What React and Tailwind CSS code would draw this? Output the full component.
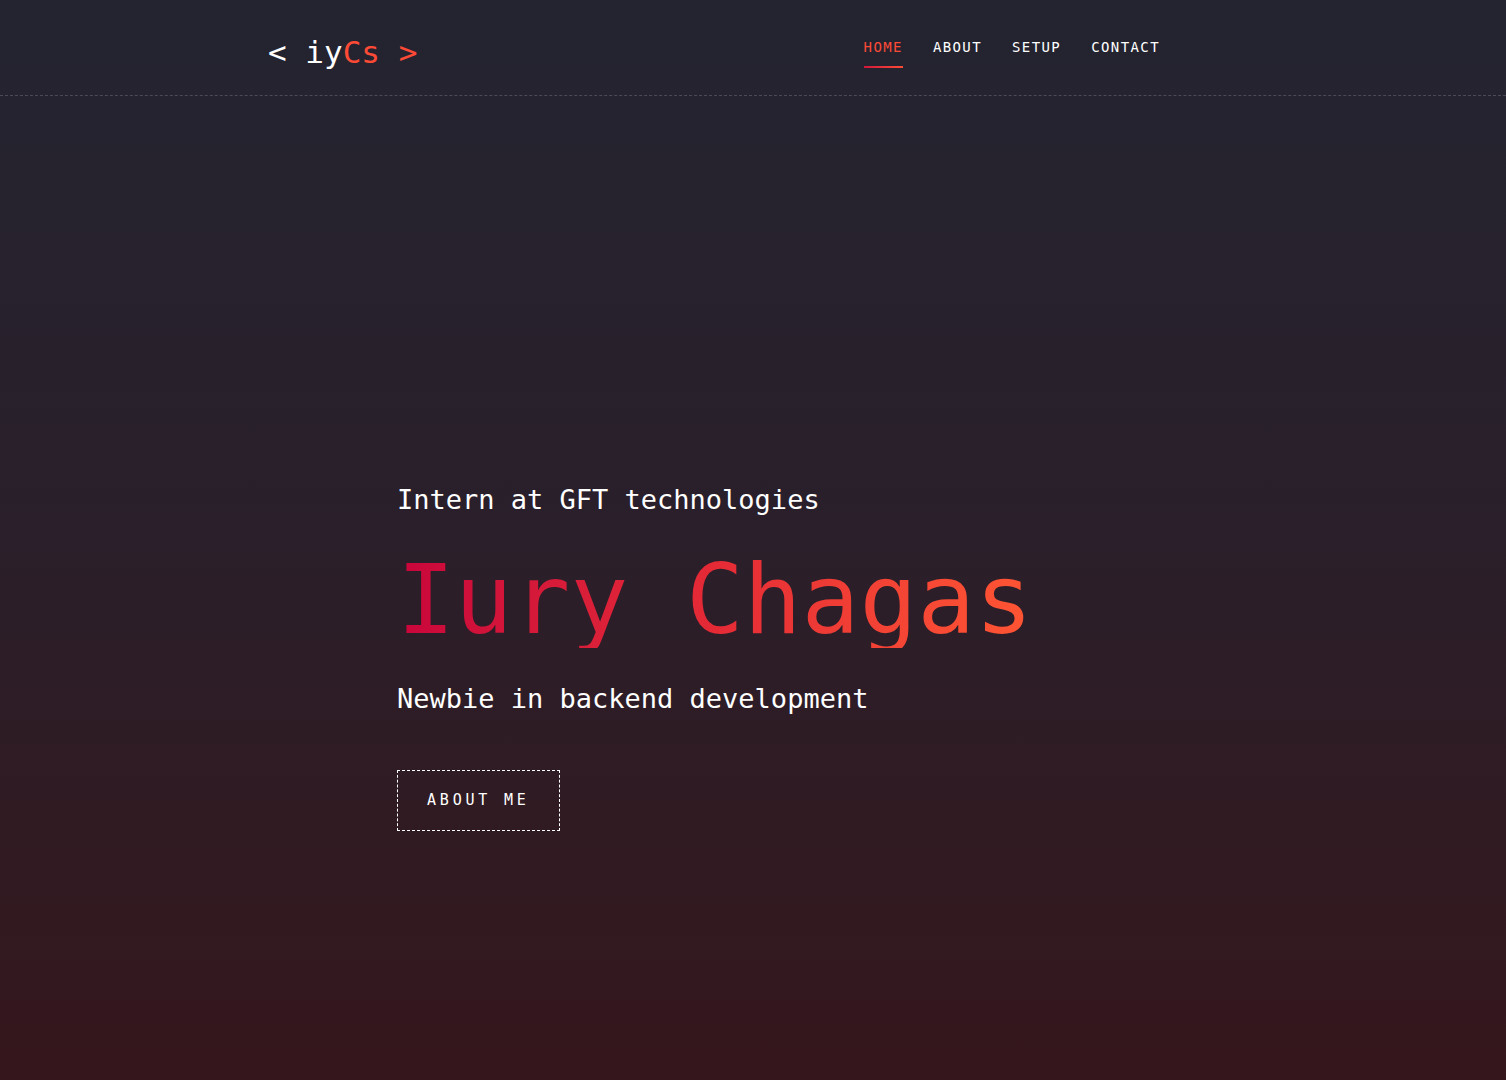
const mono = { fontFamily: '"DejaVu Sans Mono", "Liberation Mono", monospace' }

const links = ['HOME', 'ABOUT', 'SETUP', 'CONTACT']

function Header() {
  return (
    <header className="border-b border-dashed border-[#4a4a58]">
      <div className="mx-auto flex h-[95px] w-[970px] items-center justify-between">
        <a className="mt-[9px] text-[31px] leading-none text-white">
          <span>&lt; iy</span>
          <span className="text-[#fc4a36]">Cs &gt;</span>
        </a>
        <nav className="mr-[78px] mt-[12px] flex items-center gap-[30px]">
          {links.map((l, i) => (
            <a
              key={l}
              className={`relative pb-[13px] text-[14px] leading-none tracking-[1.4px] ${
                i === 0 ? 'text-[#fc4a36]' : 'text-white'
              }`}
            >
              {l}
              {i === 0 && (
                <span className="absolute bottom-[-1px] left-0 h-[2px] w-full bg-gradient-to-r from-[#d2143a] to-[#fc4a36]" />
              )}
            </a>
          ))}
        </nav>
      </div>
    </header>
  )
}

export default function App() {
  return (
    <div
      className="min-h-[1080px] w-full bg-gradient-to-b from-[#232430] via-[#2a1f2a] to-[#35161c]"
      style={mono}
    >
      <Header />
      <section className="mx-auto w-[712px] pt-[390px]">
        <p className="text-[27px] leading-none text-white">Intern at GFT technologies</p>
        <h1 className="mt-[39px] inline-block bg-gradient-to-r from-[#c9043b] via-[#e52a36] to-[#ff5533] bg-clip-text text-[96px] leading-none text-transparent">
          Iury Chagas
        </h1>
        <p className="mt-[37px] text-[27px] leading-none text-white">Newbie in backend development</p>
        <button className="mt-[58px] border border-dashed border-white px-[29px] py-[20px] text-[15px] leading-[19px] tracking-[3.8px] text-white">
          ABOUT ME
        </button>
      </section>
    </div>
  )
}
